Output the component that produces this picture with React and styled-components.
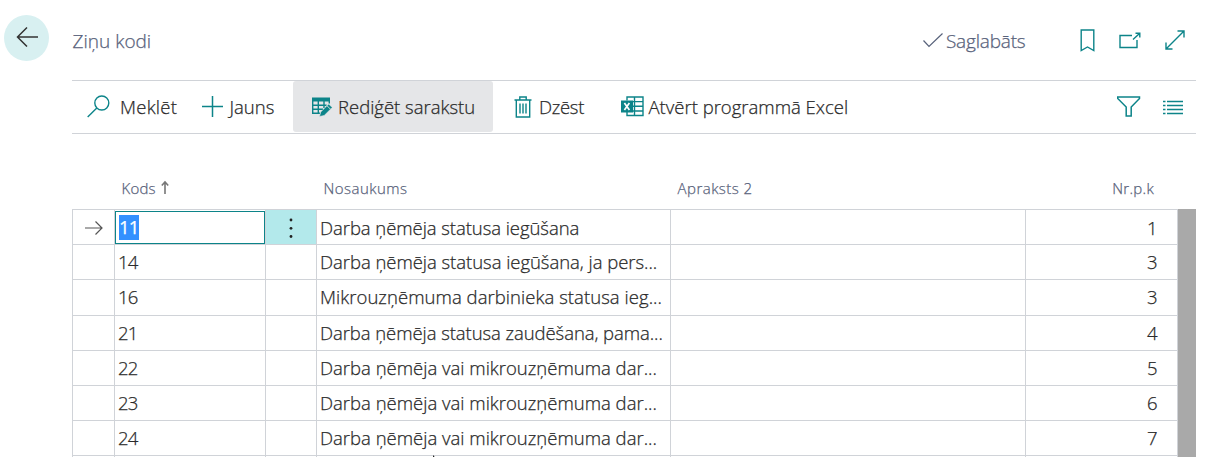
import React from 'react';
import styled, { createGlobalStyle, css } from 'styled-components';

const TEAL = '#0c8489';
const INK = '#2a2a2a';
const MUTED = '#57617a';
const LINE = '#d0d3d8';

const GlobalStyle = createGlobalStyle`
  body {
    margin: 0;
    background: #fff;
    font-family: 'Open Sans', 'Noto Sans', sans-serif;
    font-weight: 300;
    color: ${INK};
    overflow: hidden;
  }
`;

const Page = styled.div`
  position: relative;
  width: 1205px;
  height: 457px;
  overflow: hidden;
`;

const Label = styled.span`
  font-size: ${(p) => p.$size || 18.5}px;
  letter-spacing: ${(p) => p.$track || 0}px;
  line-height: 24px;
  white-space: pre;
  -webkit-text-stroke: 0.25px currentColor;
`;

const Icon = styled.svg`
  display: block;
  flex: none;
  fill: none;
  stroke: ${(p) => p.$color || TEAL};
  stroke-width: ${(p) => p.$weight || 1.4};
`;

const Header = styled.header`
  display: flex;
  align-items: flex-start;
  height: 80px;
  padding: 0 20px 0 4px;
  box-sizing: border-box;
`;

const BackButton = styled.button`
  display: flex;
  align-items: center;
  justify-content: center;
  width: 45px;
  height: 46px;
  margin: 15px 23px 0 0;
  padding: 0 0 2px;
  border: 0;
  border-radius: 50%;
  background: #d8f0f1;
`;

const Title = styled.h1`
  display: flex;
  flex: 1;
  margin: 29px 0 0;
  padding-left: 0.6px;
  font-weight: 300;
  color: ${MUTED};
`;

const SaveStatus = styled.div`
  display: flex;
  gap: 3px;
  margin: 29px 54.5px 0 0;
  color: ${MUTED};
`;

const HeaderActions = styled.div`
  display: flex;
  align-items: center;
  gap: 24px;
  height: 24px;
  margin-top: 28px;
`;

const Toolbar = styled.nav`
  display: flex;
  width: 1124px;
  height: 54px;
  margin-left: 72px;
  box-sizing: border-box;
  border-top: 1px solid ${LINE};
  border-bottom: 1px solid ${LINE};
`;

const ToolButton = styled.button`
  display: flex;
  align-items: center;
  flex: none;
  gap: ${(p) => p.$gap}px;
  width: ${(p) => p.$width}px;
  height: 51px;
  padding: 0 0 0 ${(p) => p.$inset}px;
  border: 0;
  border-radius: 3px;
  background: ${(p) => (p.$active ? '#e5e6e8' : 'transparent')};
  color: ${INK};
  font: inherit;
`;

const ViewActions = styled.div`
  display: flex;
  align-items: center;
  gap: 22px;
  height: 51px;
  margin-left: auto;
  padding-right: 13px;
`;

const Table = styled.div`
  display: flex;
  width: 1124px;
  margin-left: 72px;
`;

const columns = css`
  display: grid;
  grid-template-columns: 42px 151px 51px 354px 355px 152px;
`;

const HeadRow = styled.div`
  ${columns}
  height: 33px;
  margin: 42px 0 0 72px;
  color: ${MUTED};
`;

const HeadCell = styled.div`
  display: flex;
  align-items: flex-start;
  gap: 5px;
  justify-content: ${(p) => (p.$end ? 'flex-end' : 'flex-start')};
  padding: 0 ${(p) => (p.$end ? 23 : 0)}px 0 ${(p) => (p.$end ? 0 : 7.6)}px;
`;

const Rows = styled.div`
  width: 1105px;
  border-right: 1px solid ${LINE};
`;

const Row = styled.div`
  ${columns}
  height: ${(p) => (p.$tall ? 36 : 35)}px;
  box-sizing: border-box;
  border-top: 1px solid ${LINE};
`;

const Cell = styled.div`
  display: flex;
  align-items: center;
  justify-content: ${(p) => (p.$end ? 'flex-end' : 'flex-start')};
  box-sizing: border-box;
  min-width: 0;
  border-left: 1px solid ${LINE};
  padding: ${(p) => (p.$current ? 2 : 0)}px ${(p) => (p.$end ? 19.5 : 0)}px ${(p) => (p.$tall ? 2 : 0)}px 3px;
`;

const MarkerCell = styled(Cell)`
  padding: 2px 0 0 12px;
`;

const CodeField = styled.div`
  display: flex;
  align-items: center;
  flex: 1;
  height: 33px;
  margin: 0 0 0 -3px;
  padding-left: 3px;
  box-sizing: border-box;
  border: 1px solid ${TEAL};
`;

const Selection = styled.span`
  display: flex;
  align-items: center;
  width: 20px;
  height: 25px;
  background: #3390ff;
  color: #fff;
  font-weight: 400;
`;

const AssistCell = styled(Cell)`
  justify-content: center;
  padding: 2px 0 0;
  background: #b3e9eb;
`;

const ScrollBar = styled.div`
  width: 18px;
  background: #a9a9a9;
`;

const Pointer = styled.div`
  position: absolute;
  left: 432px;
  top: 455px;
`;

const ROWS = [
  { code: '11', name: 'Darba ņēmēja statusa iegūšana', track: -0.06, no: '1' },
  { code: '14', name: 'Darba ņēmēja statusa iegūšana, ja pers...', track: -0.04, no: '3' },
  { code: '16', name: 'Mikrouzņēmuma darbinieka statusa ieg...', track: 0.05, no: '3', tall: true },
  { code: '21', name: 'Darba ņēmēja statusa zaudēšana, pama...', track: -0.07, no: '4' },
  { code: '22', name: 'Darba ņēmēja vai mikrouzņēmuma dar...', track: 0, no: '5' },
  { code: '23', name: 'Darba ņēmēja vai mikrouzņēmuma dar...', track: 0, no: '6' },
  { code: '24', name: 'Darba ņēmēja vai mikrouzņēmuma dar...', track: 0, no: '7' },
];

const BackIcon = () => (
  <Icon width="22" height="20" viewBox="0 0 22 20" $color="#333" $weight={1.5}>
    <path d="M22 10H1.5M11 .5 1.5 10l9.5 9.5" />
  </Icon>
);

const CheckIcon = () => (
  <Icon width="20" height="22" viewBox="0 0 20 22" $color={MUTED} $weight={1.2}>
    <path d="M.5 11.500 6 17.500 19.500 4.500" />
  </Icon>
);

const BookmarkIcon = () => (
  <Icon width="15" height="23" viewBox="0 0 15 23">
    <path d="M1.200 1h12.600v20.500L7.500 18l-6.300 3.500z" />
  </Icon>
);

const PopOutIcon = () => (
  <Icon width="22" height="17" viewBox="0 0 22 17">
    <path d="M13 3.500H1v12h17V8M14 7.500 20.500 1.500M16.500 1.200h4.300v4.300" />
  </Icon>
);

const ExpandIcon = () => (
  <Icon width="20" height="20" viewBox="0 0 20 20">
    <path d="M1 19 19 1M12.500 1H19v6.500M1 12.500V19h6.500" />
  </Icon>
);

const SearchIcon = () => (
  <Icon width="23" height="23" viewBox="0 0 23 23">
    <circle cx="14.800" cy="8" r="7" />
    <path d="M9.800 13 .7 22" />
  </Icon>
);

const PlusIcon = () => (
  <Icon width="21" height="21" viewBox="0 0 21 21" $weight={1.5}>
    <path d="M10.500 0v21M0 10.500h21" />
  </Icon>
);

const EditListIcon = () => (
  <Icon width="21" height="20" viewBox="0 0 21 20">
    <path d="M0 .5h18v4H0z" fill={TEAL} stroke="none" />
    <path d="M.7 4v12.300H8M.7 8.300h14M.7 12.300H11M6.300 4v12.300M12 4v7M17.300 4v2.500" />
    <path d="m7.500 19.500 1.200-4.500 8-8 3.500 3.500-8 8z" fill={TEAL} stroke="#e5e6e8" strokeWidth=".6" />
    <path d="m14.800 8.500 3.500 3.500" stroke="#e5e6e8" strokeWidth=".9" />
  </Icon>
);

const TrashIcon = () => (
  <Icon width="18" height="22" viewBox="0 0 18 22">
    <path d="M.5 4h17M5.800 4V1h6.400v3M2.300 4v17h13.400V4M6 7.500V17.500M9 7.500V17.500M12 7.500V17.500" />
  </Icon>
);

const ExcelIcon = () => (
  <Icon width="23" height="21" viewBox="0 0 23 21">
    <path d="M6 4.500V1h16v18.500H6V16M13.500 1v18.500M6 5.600h16M11 10.300h11M6 15h16" />
    <path d="M0 4.500h12v12H0z" fill={TEAL} stroke="none" />
    <path d="m3.400 7 5 7M8.400 7l-5 7" stroke="#fff" strokeWidth="1.700" />
  </Icon>
);

const FilterIcon = () => (
  <Icon width="24" height="21" viewBox="0 0 24 21" $weight={1.5}>
    <path d="M.7 1h21.800v1.500l-8.300 8.500v9h-5v-9L.7 2.500z" />
  </Icon>
);

const ListIcon = () => (
  <Icon width="20" height="16" viewBox="0 0 20 16" $weight={1.5}>
    <path d="M0 2.500h2.500M4 2.500h16M0 6.500h2.500M4 6.500h16M0 10.500h2.500M4 10.500h16M0 14.500h2.500M4 14.500h16" />
  </Icon>
);

const SortIcon = () => (
  <Icon width="8" height="18" viewBox="0 0 8 18" $color="#777" $weight={1.6}>
    <path d="M4 18V6M.8 9.500 4 6 7.200 9.500" />
  </Icon>
);

const RowArrowIcon = () => (
  <Icon width="18" height="14" viewBox="0 0 18 14" $color="#555" $weight={1.2}>
    <path d="M0 7h17M10.500.5 17 7l-6.500 6.500" />
  </Icon>
);

const DotsIcon = () => (
  <Icon width="4" height="20" viewBox="0 0 4 20">
    <g fill="#222" stroke="none">
      <circle cx="2" cy="2" r="1.400" />
      <circle cx="2" cy="10.300" r="1.400" />
      <circle cx="2" cy="18.500" r="1.400" />
    </g>
  </Icon>
);

export default function App() {
  return (
    <Page>
      <GlobalStyle />
      <Header>
        <BackButton aria-label="Atpakaļ"><BackIcon /></BackButton>
        <Title><Label $size={19}>Ziņu kodi</Label></Title>
        <SaveStatus>
          <CheckIcon />
          <Label $size={19} $track={-0.18}>Saglabāts</Label>
        </SaveStatus>
        <HeaderActions>
          <BookmarkIcon />
          <PopOutIcon />
          <ExpandIcon />
        </HeaderActions>
      </Header>

      <Toolbar>
        <ToolButton $width={118} $inset={15} $gap={10}>
          <SearchIcon /><Label $track={0.25}>Meklēt</Label>
        </ToolButton>
        <ToolButton $width={103} $inset={12} $gap={6.5}>
          <PlusIcon /><Label>Jauns</Label>
        </ToolButton>
        <ToolButton $width={200} $inset={19} $gap={5} $active>
          <EditListIcon /><Label>Rediģēt sarakstu</Label>
        </ToolButton>
        <ToolButton $width={107} $inset={21} $gap={7}>
          <TrashIcon /><Label $track={-0.3}>Dzēst</Label>
        </ToolButton>
        <ToolButton $width={260} $inset={21} $gap={4.5}>
          <ExcelIcon /><Label>Atvērt programmā Excel</Label>
        </ToolButton>
        <ViewActions>
          <FilterIcon />
          <ListIcon />
        </ViewActions>
      </Toolbar>

      <HeadRow>
        <span />
        <HeadCell>
          <Label $size={15} $track={0.19}>Kods</Label>
          <SortIcon />
        </HeadCell>
        <span />
        <HeadCell><Label $size={15} $track={0.44}>Nosaukums</Label></HeadCell>
        <HeadCell><Label $size={15} $track={0.46}>Apraksts 2</Label></HeadCell>
        <HeadCell $end><Label $size={15} $track={0.31}>Nr.p.k</Label></HeadCell>
      </HeadRow>

      <Table>
        <Rows>
          {ROWS.map((row, i) => {
            const current = i === 0;
            const place = { $current: current, $tall: row.tall };
            return (
              <Row key={row.code} $tall={row.tall}>
                <MarkerCell>{current && <RowArrowIcon />}</MarkerCell>
                {current ? (
                  <Cell>
                    <CodeField>
                      <Selection><Label $track={-0.8}>{row.code}</Label></Selection>
                    </CodeField>
                  </Cell>
                ) : (
                  <Cell {...place}><Label $track={-0.8}>{row.code}</Label></Cell>
                )}
                {current ? <AssistCell><DotsIcon /></AssistCell> : <Cell />}
                <Cell {...place}><Label $track={row.track}>{row.name}</Label></Cell>
                <Cell />
                <Cell {...place} $end><Label>{row.no}</Label></Cell>
              </Row>
            );
          })}
          <Row>
            <Cell /><Cell /><Cell /><Cell /><Cell /><Cell />
          </Row>
        </Rows>
        <ScrollBar />
      </Table>

      <Pointer>
        <svg width="8" height="8" viewBox="0 0 8 8" display="block">
          <path d="M1 0v8l6-1z" fill="#222" />
        </svg>
      </Pointer>
    </Page>
  );
}
